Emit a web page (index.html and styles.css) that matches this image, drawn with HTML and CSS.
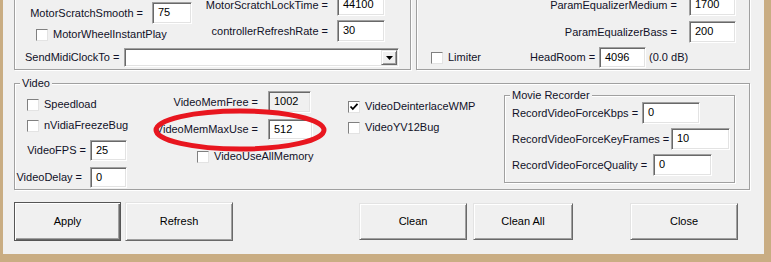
FILE: index.html
```html
<!DOCTYPE html>
<html>
<head>
<meta charset="utf-8">
<link rel="stylesheet" href="styles.css">
</head>
<body>
<div class="dialog">
  <div class="top-row">
    <div class="group grp-motor">
      <div class="motor-cols">
        <div class="motor-left">
          <div class="field"><span class="lbl lbl-mss">MotorScratchSmooth =</span><div class="edit w40">75</div></div>
          <div class="check chk-wheel"><span class="box"></span><span>MotorWheelInstantPlay</span></div>
        </div>
        <div class="motor-right">
          <div class="field"><span class="lbl lbl-mrt">MotorScratchLockTime =</span><div class="edit w48">44100</div></div>
          <div class="field"><span class="lbl lbl-mrt">controllerRefreshRate =</span><div class="edit w48">30</div></div>
        </div>
      </div>
      <div class="field midi">
        <span class="lbl lbl-midi">SendMidiClockTo =</span>
        <div class="combo">
          <span class="drop"><svg width="7" height="4" viewBox="0 0 7 4"><polygon points="0,0 7,0 3.5,4" fill="#000"/></svg></span>
        </div>
      </div>
    </div>
    <div class="group grp-eq">
      <div class="field eq-row eq-row1"><span class="lbl">ParamEqualizerMedium =</span><div class="edit w47">1700</div></div>
      <div class="field eq-row eq-row2"><span class="lbl">ParamEqualizerBass =</span><div class="edit w47">200</div></div>
      <div class="field eq-bottom">
        <div class="check chk-limiter"><span class="box"></span><span>Limiter</span></div>
        <span class="lbl lbl-head">HeadRoom =</span>
        <div class="edit w47 h21">4096</div>
        <span class="db">(0.0 dB)</span>
      </div>
    </div>
  </div>

  <div class="group grp-video">
    <span class="legend">Video</span>
    <div class="vcol vcol-a">
      <div class="check vchk1"><span class="box"></span><span>Speedload</span></div>
      <div class="check vchk2"><span class="box"></span><span>nVidiaFreezeBug</span></div>
      <div class="field fps"><span class="lbl lbl-fps">VideoFPS =</span><div class="edit w37 h21">25</div></div>
      <div class="field delay"><span class="lbl lbl-delay">VideoDelay =</span><div class="edit w37 h21">0</div></div>
    </div>
    <div class="vcol vcol-b">
      <div class="field memfree"><span class="lbl lbl-mem">VideoMemFree =</span><div class="edit w43 disabled">1002</div></div>
      <div class="field memmax"><span class="lbl lbl-mem">VideoMemMaxUse =</span><div class="edit w45 h21">512</div></div>
      <div class="check chk-useall"><span class="box"></span><span>VideoUseAllMemory</span></div>
    </div>
    <div class="vcol vcol-c">
      <div class="check chk-deint"><span class="box"><svg width="10" height="10" viewBox="0 0 10 10"><polyline points="1.5,4.5 3.8,7 8.5,1.8" fill="none" stroke="#000" stroke-width="1.8"/></svg></span><span>VideoDeinterlaceWMP</span></div>
      <div class="check chk-yv12"><span class="box"></span><span>VideoYV12Bug</span></div>
    </div>
    <div class="group grp-movie">
      <span class="legend">Movie Recorder</span>
      <div class="field rec rec1"><span class="lbl lbl-kbps">RecordVideoForceKbps =</span><div class="edit w58">0</div></div>
      <div class="field rec"><span class="lbl lbl-key">RecordVideoForceKeyFrames =</span><div class="edit w59">10</div></div>
      <div class="field rec"><span class="lbl lbl-qual">RecordVideoForceQuality =</span><div class="edit w59">0</div></div>
    </div>
    <svg class="ellipse" width="180" height="50" viewBox="0 0 180 50"><ellipse cx="90" cy="24" rx="84" ry="19" fill="none" stroke="#e8161f" stroke-width="5"/></svg>
  </div>

  <div class="buttons">
    <div class="btn btn-default btn-apply">Apply</div>
    <div class="btn btn-refresh">Refresh</div>
    <div class="btn btn-small btn-clean">Clean</div>
    <div class="btn btn-small btn-cleanall">Clean All</div>
    <div class="btn btn-small btn-close">Close</div>
  </div>
</div>
</body>
</html>
```
FILE: styles.css
```css
* { box-sizing: border-box; }
html, body { margin: 0; padding: 0; }
body {
  width: 771px;
  height: 262px;
  overflow: hidden;
  background: #c9ad83;
  font: 11px/13px "Liberation Sans", Arial, sans-serif;
  color: #111128;
}
.dialog {
  margin-left: 3px;
  width: 761px;
  height: 254px;
  background: #f0f0f0;
  overflow: hidden;
  display: flex;
  flex-direction: column;
}
.group {
  position: relative;
  border: 1px solid #a0a0a0;
  box-shadow: inset 1px 1px 0 #fff, 1px 1px 0 #fff;
}
.legend {
  position: absolute;
  top: -7px;
  left: 5px;
  padding: 0 2px;
  background: #f0f0f0;
  line-height: 13px;
  white-space: nowrap;
}
.field { display: flex; align-items: center; }
.lbl { white-space: nowrap; }
.edit {
  height: 22px;
  background: #fff;
  border: 1px solid;
  border-color: #a0a0a0 #fff #fff #a0a0a0;
  box-shadow: inset 1px 1px 0 #696969, inset -1px -1px 0 #e3e3e3;
  padding: 3px 0 0 5px;
  line-height: 13px;
  color: #000;
  flex: none;
}
.edit.h21 { height: 21px; }
.edit.disabled { background: #f0f0f0; }
.w37 { width: 37px; }
.w40 { width: 40px; }
.w43 { width: 43px; }
.w45 { width: 45px; }
.w47 { width: 47px; }
.w48 { width: 48px; }
.w58 { width: 58px; }
.w59 { width: 59px; }

.check { display: flex; align-items: center; gap: 5px; height: 13px; white-space: nowrap; }
.box {
  width: 12px;
  height: 12px;
  flex: none;
  background: #fff;
  border: 1px solid;
  border-color: #808080 #e3e3e3 #e3e3e3 #808080;
  display: flex;
  align-items: center;
  justify-content: center;
}

/* top row */
.top-row {
  display: flex;
  gap: 5px;
  margin: -10px 0 0 11px;
  height: 80px;
  flex: none;
}
.grp-motor {
  width: 397px;
  height: 80px;
  display: flex;
  flex-direction: column;
}
.motor-cols { display: flex; align-items: flex-start; }
.motor-left { margin-top: 11px; display: flex; flex-direction: column; gap: 4px; }
.motor-right { margin-top: 3px; display: flex; flex-direction: column; gap: 4px; }
.lbl-mss { width: 128px; text-align: right; margin-right: 9px; }
.lbl-mrt { width: 136px; text-align: right; margin-right: 9px; }
.chk-wheel { margin-left: 21px; }
.midi { margin: 6px 0 0 10px; }
.lbl-midi { width: 99px; }
.combo {
  width: 275px;
  height: 19px;
  background: #fff;
  border: 1px solid;
  border-color: #a0a0a0 #fff #fff #a0a0a0;
  box-shadow: inset 1px 1px 0 #696969, inset -1px -1px 0 #e3e3e3;
  display: flex;
  justify-content: flex-end;
  padding: 1px;
}
.drop {
  width: 16px;
  height: 15px;
  background: #f0f0f0;
  border: 1px solid;
  border-color: #e3e3e3 #696969 #696969 #e3e3e3;
  box-shadow: inset 1px 1px 0 #fff, inset -1px -1px 0 #a0a0a0;
  display: flex;
  align-items: center;
  justify-content: center;
}

.grp-eq {
  width: 334px;
  height: 80px;
  display: flex;
  flex-direction: column;
}
.eq-row { justify-content: flex-end; padding-right: 13px; }
.eq-row .lbl { margin-right: 12px; }
.eq-row1 { margin-top: 3px; }
.eq-row2 { margin-top: 5px; }
.eq-bottom { margin: 4px 0 0 14px; }
.chk-limiter { width: 99px; }
.lbl-head { width: 64px; text-align: right; margin-right: 5px; }
.db { margin-left: 3px; white-space: nowrap; }

/* video */
.grp-video {
  margin: 13px 0 0 11px;
  width: 736px;
  height: 107px;
  flex: none;
  display: flex;
  align-items: flex-start;
}
.vcol { display: flex; flex-direction: column; align-items: flex-start; flex: none; }
.vcol-a { width: 125px; }
.vchk1 { margin: 14px 0 0 12px; }
.vchk2 { margin: 8px 0 0 12px; }
.fps { margin-top: 8px; }
.delay { margin-top: 6px; }
.lbl-fps { width: 71px; text-align: right; margin-right: 4px; }
.lbl-delay { width: 67px; text-align: right; margin-right: 8px; }

.vcol-b { width: 173px; }
.lbl-mem { width: 118px; text-align: right; margin-right: 10px; }
.memfree { margin-top: 7px; }
.memmax { margin-top: 6px; }
.chk-useall { margin: 10px 0 0 57px; }

.vcol-c { width: 191px; padding-left: 35px; }
.chk-deint { margin-top: 16px; }
.chk-yv12 { margin-top: 8px; }

.grp-movie {
  width: 231px;
  height: 88px;
  margin-top: 11px;
  flex: none;
  display: flex;
  flex-direction: column;
}
.rec { margin-top: 4px; padding-left: 7px; }
.rec1 { margin-top: 6px; }
.lbl-kbps { width: 130px; }
.lbl-key { width: 159px; }
.lbl-qual { width: 141px; }

.ellipse { position: absolute; left: 135px; top: 22px; }

/* buttons */
.buttons {
  display: flex;
  align-items: center;
  margin: 12px 0 0 11px;
  height: 39px;
}
.btn {
  width: 108px;
  height: 39px;
  flex: none;
  background: #f0f0f0;
  border: 1px solid;
  border-color: #e3e3e3 #696969 #696969 #e3e3e3;
  box-shadow: inset 1px 1px 0 #fff, inset -1px -1px 0 #a0a0a0;
  display: flex;
  align-items: center;
  justify-content: center;
  color: #000;
}
.btn-default {
  width: 107px;
  border-color: #555;
  box-shadow: inset 1px 1px 0 #fff, inset -1px -1px 0 #696969, inset -2px -2px 0 #a0a0a0;
}
.btn-small { height: 37px; }
.btn-refresh { margin-left: 4px; }
.btn-clean { margin-left: 126px; }
.btn-cleanall { margin-left: 6px; width: 100px; }
.btn-close { margin-left: 57px; }
```
